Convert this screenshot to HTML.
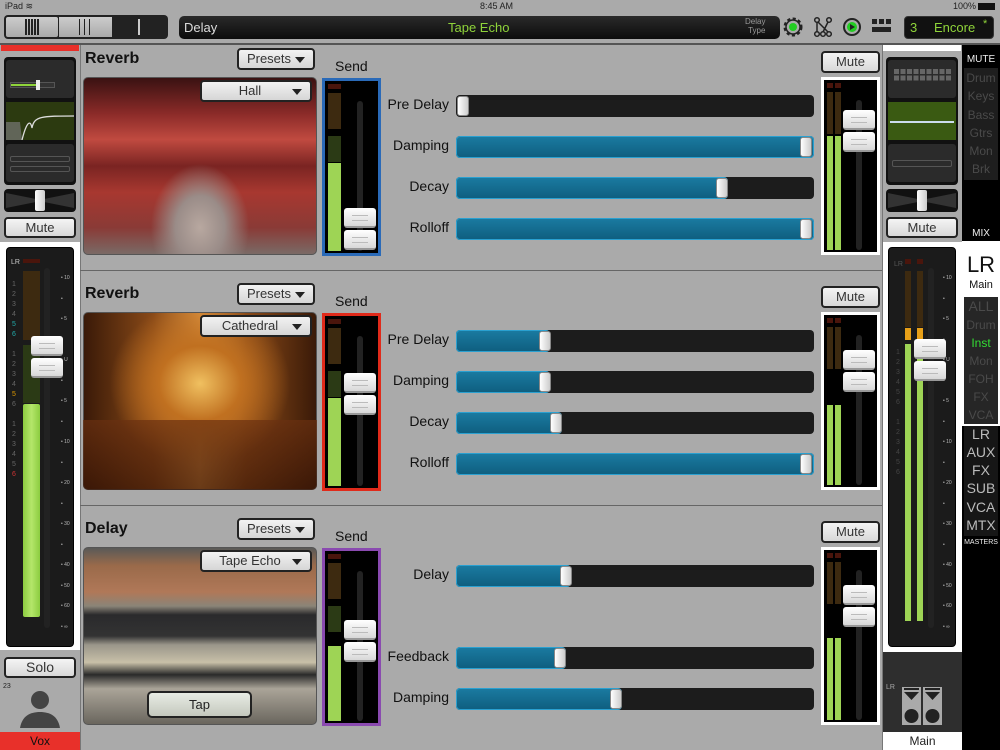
<!DOCTYPE html>
<html><head><meta charset="utf-8"><style>
*{box-sizing:border-box;margin:0;padding:0}
body{width:1000px;height:750px;background:#aaaaaa;font-family:"Liberation Sans",sans-serif;position:relative;overflow:hidden}
.a{position:absolute}
.btn{position:absolute;background:linear-gradient(#f4f4f4,#d8d8d8);border:2px solid #222;border-radius:4px;color:#333;text-align:center;font-size:13px}
.dd{position:absolute;background:linear-gradient(#f2f2f2,#d6d6d6);border:2px solid #222;border-radius:4px;color:#333;font-size:13px;text-align:center}
.dd:after{content:"";position:absolute;right:8px;top:7px;border-left:5px solid transparent;border-right:5px solid transparent;border-top:6px solid #222}
.title{position:absolute;left:85px;font-size:16px;font-weight:bold;color:#111}
.lbl{position:absolute;width:120px;text-align:right;left:329px;font-size:14px;color:#111}
.trk{position:absolute;left:456px;width:358px;height:22px;background:#1c1c1c;border-radius:4px}
.fill{position:absolute;left:0;top:0;height:22px;background:linear-gradient(#1a7aa0,#0f5f80);border:1px solid #2aa0d0;border-radius:4px}
.knob{position:absolute;top:1px;width:12px;height:20px;background:linear-gradient(90deg,#fff,#ccc);border-radius:3px;border:1px solid #888}
.send{position:absolute;left:322px;width:59px;height:178px;background:#000;border:3px solid}
.mbox{position:absolute;left:821px;width:59px;height:178px;background:#000;border:3px solid #fff}
.seg{position:absolute;width:13px}
.cap{position:absolute;width:34px;height:20px;background:linear-gradient(#fff,#d8d8d8);border-radius:3px;border-bottom:2px solid #999}
.cap:after{content:"";position:absolute;left:8px;right:8px;top:7px;height:4px;border-top:1px solid #bbb;border-bottom:1px solid #bbb}
.slot{position:absolute;width:6px;background:#222;border-radius:3px}
.sep{position:absolute;left:80px;width:802px;height:1px;background:#666}
.ml{position:absolute;left:962px;width:38px;text-align:center;font-size:12px;color:#4a4a4a}
.mm{position:absolute;left:962px;width:38px;text-align:center;font-size:14px;color:#bbb}
</style></head><body>
<!-- status -->
<div class="a" style="left:5px;top:1px;font-size:9px;color:#222">iPad ≋</div>
<div class="a" style="left:480px;top:1px;font-size:9px;color:#222">8:45 AM</div>
<div class="a" style="left:953px;top:1px;font-size:9px;color:#222">100%</div>
<div class="a" style="left:978px;top:3px;width:17px;height:7px;background:#111"></div>
<!-- top bar -->
<div class="a" style="left:4px;top:15px;width:164px;height:24px;background:#222;border-radius:4px"></div>
<div class="a" style="left:6px;top:17px;width:52px;height:20px;background:linear-gradient(#ccc,#aaa);border-radius:2px"></div>
<div class="a" style="left:59px;top:17px;width:53px;height:20px;background:linear-gradient(#ccc,#aaa)"></div>
<div class="a" style="left:25px;top:19px;width:14px;height:16px;background:repeating-linear-gradient(90deg,#222 0 2px,transparent 2px 3px)"></div>
<div class="a" style="left:77px;top:19px;width:16px;height:16px;background:repeating-linear-gradient(90deg,transparent 0 2px,#222 2px 3px,transparent 3px 5px)"></div>
<div class="a" style="left:138px;top:19px;width:2px;height:16px;background:#ccc"></div>
<div class="a" style="left:179px;top:16px;width:601px;height:23px;background:linear-gradient(#2a2a2a,#0c0c0c);border-radius:5px"></div>
<div class="a" style="left:184px;top:20px;font-size:13px;color:#ddd">Delay</div>
<div class="a" style="left:448px;top:20px;font-size:13px;color:#8fd43a">Tape Echo</div>
<div class="a" style="left:745px;top:17px;font-size:8px;line-height:9px;color:#999;text-align:right">Delay<br>Type</div>
<svg class="a" style="left:780px;top:14px" width="120" height="28">
<circle cx="13" cy="13" r="8" fill="none" stroke="#222" stroke-width="3" stroke-dasharray="3 2.3"/><circle cx="13" cy="13" r="7" fill="none" stroke="#222" stroke-width="1.5"/><circle cx="13" cy="13" r="4" fill="#2c2"/>
<g fill="none" stroke="#222" stroke-width="1.5"><circle cx="37" cy="6" r="2.3"/><circle cx="37" cy="20" r="2.3"/><circle cx="43" cy="20" r="2.3"/><circle cx="49" cy="20" r="2.3"/><circle cx="49" cy="6" r="2.3"/><path d="M37 8V18M38 8L48 18M48 8L43 18"/></g>
<circle cx="72" cy="13" r="8" fill="none" stroke="#222" stroke-width="2"/><circle cx="72" cy="13" r="5" fill="#2c2"/><path d="M70 10L75 13L70 16Z" fill="#222"/>
<g fill="#222"><rect x="92" y="5" width="5" height="5"/><rect x="99" y="5" width="5" height="5"/><rect x="106" y="5" width="5" height="5"/><rect x="92" y="13" width="19" height="5"/></g>
</svg>
<div class="a" style="left:904px;top:16px;width:90px;height:23px;background:#111;border-radius:4px;border:1px solid #333"></div>
<div class="a" style="left:910px;top:20px;font-size:13px;color:#8fd43a">3</div>
<div class="a" style="left:934px;top:20px;font-size:13px;color:#8fd43a">Encore</div>
<div class="a" style="left:983px;top:18px;font-size:11px;color:#8fd43a">*</div>
<div class="a" style="left:0;top:43px;width:1000px;height:2px;background:#555"></div>

<!-- left strip -->
<div class="a" style="left:80px;top:45px;width:1px;height:705px;background:#777"></div>
<div class="a" style="left:1px;top:45px;width:78px;height:6px;background:#e8302a"></div>
<div class="a" style="left:4px;top:57px;width:72px;height:128px;background:#111;border-radius:4px"></div>
<div class="a" style="left:6px;top:60px;width:68px;height:38px;background:#2b2b2b;border-radius:3px"></div>
<div class="a" style="left:10px;top:82px;width:45px;height:6px;background:#333;border:1px solid #555"></div>
<div class="a" style="left:11px;top:84px;width:28px;height:2px;background:#8fd43a"></div>
<div class="a" style="left:36px;top:80px;width:4px;height:10px;background:#eee"></div>
<div class="a" style="left:6px;top:102px;width:68px;height:38px;background:#2c3a10"></div>
<svg class="a" style="left:6px;top:102px" width="68" height="38"><path d="M0 20H14L16 38H0Z" fill="#777" opacity=".7"/><path d="M16 38C20 22 24 16 26 26C28 14 36 14 68 14" fill="none" stroke="#ddd" stroke-width="1.3"/></svg>
<div class="a" style="left:6px;top:144px;width:68px;height:38px;background:#2b2b2b;border-radius:3px"></div>
<div class="a" style="left:10px;top:156px;width:60px;height:6px;border:1px solid #555;border-radius:2px"></div>
<div class="a" style="left:10px;top:166px;width:60px;height:6px;border:1px solid #555;border-radius:2px"></div>
<div class="a" style="left:4px;top:189px;width:72px;height:23px;background:#111;border-radius:4px"></div>
<svg class="a" style="left:6px;top:191px" width="68" height="19"><path d="M0 2L30 8V11L0 17ZM68 2L38 8V11L68 17Z" fill="#333"/></svg>
<div class="a" style="left:35px;top:190px;width:10px;height:21px;background:linear-gradient(90deg,#fff,#ccc);border-radius:2px"></div>
<div class="btn" style="left:4px;top:217px;width:72px;height:21px;font-size:13px;line-height:17px">Mute</div>
<div class="a" style="left:0;top:242px;width:80px;height:408px;background:#fff"></div>
<div class="a" style="left:6px;top:247px;width:68px;height:400px;background:#1b1b1b;border:1px solid #000;border-radius:4px"></div>
<div class="a" style="left:11px;top:259px;font-size:7px;color:#ccc">LR</div>
<div class="a" style="left:23px;top:259px;width:17px;height:4px;background:#4a150c"></div>
<div class="a" style="left:23px;top:271px;width:17px;height:69px;background:#3d2a10"></div>
<div class="a" style="left:23px;top:345px;width:17px;height:58px;background:#2b3a15"></div>
<div class="a" style="left:23px;top:404px;width:17px;height:213px;background:linear-gradient(90deg,#8ccc40,#b4e66a,#8ccc40);border-radius:2px"></div>
<div class="slot" style="left:44px;top:268px;height:360px"></div>
<div class="a" style="left:12px;top:280px;font-size:7px;line-height:10px;color:#666">1<br>2<br>3<br>4<br><span style="color:#2aa">5</span><br><span style="color:#2aa">6</span><br><br>1<br>2<br>3<br>4<br><span style="color:#d90">5</span><br>6<br><br>1<br>2<br>3<br>4<br>5<br><span style="color:#c33">6</span></div>
<div class="a" style="left:61px;top:268px;font-size:5px;line-height:20.5px;color:#bbb">• 10<br>•<br>• 5<br>•<br>• U<br>•<br>• 5<br>•<br>• 10<br>•<br>• 20<br>•<br>• 30<br>•<br>• 40<br>• 50<br>• 60<br>• ∞</div>
<div class="cap" style="left:31px;top:336px;width:32px"></div>
<div class="cap" style="left:31px;top:358px;width:32px"></div>
<div class="btn" style="left:4px;top:657px;width:72px;height:21px;font-size:14px;line-height:17px">Solo</div>
<div class="a" style="left:3px;top:683px;font-size:7px;color:#222">23</div>
<svg class="a" style="left:18px;top:686px" width="44" height="44"><circle cx="22" cy="14" r="9" fill="#444"/><path d="M2 42C4 30 12 26 22 26S40 30 42 42Z" fill="#444"/></svg>
<div class="a" style="left:0;top:732px;width:80px;height:18px;background:#e8302a;text-align:center;font-size:12px;line-height:18px;color:#111">Vox</div>

<!-- sections -->
<div class="sep" style="top:270px"></div><div class="sep" style="top:505px"></div>

<!-- sec 1 -->
<div class="title" style="top:50px">Reverb</div>
<div class="dd" style="left:237px;top:48px;width:78px;height:22px;line-height:18px;padding-right:14px">Presets</div>
<div class="a" style="left:83px;top:77px;width:234px;height:178px;border-radius:5px;border:1px solid #555;background:radial-gradient(ellipse at 50% 85%,#b8a8a0 0,#9a8c88 15%,transparent 30%),linear-gradient(#3a1212 0%,#8a2a28 20%,#c04a40 35%,#7a2422 50%,#a83830 65%,#8a3a36 85%,#7a6a66 100%)"></div>
<div class="dd" style="left:200px;top:80px;width:112px;height:22px;line-height:18px;padding-right:12px">Hall</div>
<div class="a" style="left:335px;top:58px;font-size:14px;color:#111">Send</div>
<div class="send" style="top:78px;border-color:#2a6ab8">
<div class="seg" style="left:3px;top:3px;height:5px;background:#4a150c"></div>
<div class="seg" style="left:3px;top:12px;height:36px;background:#3d2a10"></div>
<div class="seg" style="left:3px;top:55px;height:26px;background:#2b3a15"></div>
<div class="seg" style="left:3px;top:82px;height:88px;background:#9ed455"></div>
<div class="slot" style="left:32px;top:20px;height:150px"></div>
<div class="cap" style="left:19px;top:127px;width:32px"></div><div class="cap" style="left:19px;top:149px;width:32px"></div></div>
<div class="lbl" style="top:96px">Pre Delay</div><div class="trk" style="top:95px"><div class="knob" style="left:1px"></div></div>
<div class="lbl" style="top:137px">Damping</div><div class="trk" style="top:136px"><div class="fill" style="width:358px"></div><div class="knob" style="left:344px"></div></div>
<div class="lbl" style="top:178px">Decay</div><div class="trk" style="top:177px"><div class="fill" style="width:272px"></div><div class="knob" style="left:260px"></div></div>
<div class="lbl" style="top:219px">Rolloff</div><div class="trk" style="top:218px"><div class="fill" style="width:358px"></div><div class="knob" style="left:344px"></div></div>
<div class="btn" style="left:821px;top:51px;width:59px;height:22px;line-height:18px">Mute</div>
<div class="mbox" style="top:77px">
<div class="seg" style="left:3px;top:3px;width:6px;height:5px;background:#4a150c"></div><div class="seg" style="left:11px;top:3px;width:6px;height:5px;background:#4a150c"></div>
<div class="seg" style="left:3px;top:12px;width:6px;height:42px;background:#3d2a10"></div><div class="seg" style="left:11px;top:12px;width:6px;height:42px;background:#3d2a10"></div>
<div class="seg" style="left:3px;top:56px;width:6px;height:114px;background:#9ed455"></div><div class="seg" style="left:11px;top:56px;width:6px;height:114px;background:#9ed455"></div>
<div class="slot" style="left:32px;top:20px;height:150px"></div>
<div class="cap" style="left:19px;top:30px;width:32px"></div><div class="cap" style="left:19px;top:52px;width:32px"></div></div>

<!-- sec 2 -->
<div class="title" style="top:285px">Reverb</div>
<div class="dd" style="left:237px;top:283px;width:78px;height:22px;line-height:18px;padding-right:14px">Presets</div>
<div class="a" style="left:83px;top:312px;width:234px;height:178px;border-radius:5px;border:1px solid #555;background:radial-gradient(ellipse at 50% 40%,#f0c060 0,#c07020 25%,transparent 55%),linear-gradient(90deg,#3a1a08,#8a4a18 30%,#d89040 50%,#8a4a18 70%,#3a1a08),#6a3010"></div>
<div class="a" style="left:83px;top:420px;width:234px;height:70px;border-radius:0 0 5px 5px;background:linear-gradient(#6a3010,#3a1606);opacity:.7"></div>
<div class="dd" style="left:200px;top:315px;width:112px;height:22px;line-height:18px;padding-right:12px">Cathedral</div>
<div class="a" style="left:335px;top:293px;font-size:14px;color:#111">Send</div>
<div class="send" style="top:313px;border-color:#e02a1a">
<div class="seg" style="left:3px;top:3px;height:5px;background:#4a150c"></div>
<div class="seg" style="left:3px;top:12px;height:36px;background:#3d2a10"></div>
<div class="seg" style="left:3px;top:55px;height:26px;background:#2b3a15"></div>
<div class="seg" style="left:3px;top:82px;height:88px;background:#9ed455"></div>
<div class="slot" style="left:32px;top:20px;height:150px"></div>
<div class="cap" style="left:19px;top:57px;width:32px"></div><div class="cap" style="left:19px;top:79px;width:32px"></div></div>
<div class="lbl" style="top:331px">Pre Delay</div><div class="trk" style="top:330px"><div class="fill" style="width:94px"></div><div class="knob" style="left:83px"></div></div>
<div class="lbl" style="top:372px">Damping</div><div class="trk" style="top:371px"><div class="fill" style="width:94px"></div><div class="knob" style="left:83px"></div></div>
<div class="lbl" style="top:413px">Decay</div><div class="trk" style="top:412px"><div class="fill" style="width:106px"></div><div class="knob" style="left:94px"></div></div>
<div class="lbl" style="top:454px">Rolloff</div><div class="trk" style="top:453px"><div class="fill" style="width:358px"></div><div class="knob" style="left:344px"></div></div>
<div class="btn" style="left:821px;top:286px;width:59px;height:22px;line-height:18px">Mute</div>
<div class="mbox" style="top:312px">
<div class="seg" style="left:3px;top:3px;width:6px;height:5px;background:#4a150c"></div><div class="seg" style="left:11px;top:3px;width:6px;height:5px;background:#4a150c"></div>
<div class="seg" style="left:3px;top:12px;width:6px;height:42px;background:#3d2a10"></div><div class="seg" style="left:11px;top:12px;width:6px;height:42px;background:#3d2a10"></div>
<div class="seg" style="left:3px;top:90px;width:6px;height:80px;background:#9ed455"></div><div class="seg" style="left:11px;top:90px;width:6px;height:80px;background:#9ed455"></div>
<div class="slot" style="left:32px;top:20px;height:150px"></div>
<div class="cap" style="left:19px;top:35px;width:32px"></div><div class="cap" style="left:19px;top:57px;width:32px"></div></div>

<!-- sec 3 -->
<div class="title" style="top:520px">Delay</div>
<div class="dd" style="left:237px;top:518px;width:78px;height:22px;line-height:18px;padding-right:14px">Presets</div>
<div class="a" style="left:83px;top:547px;width:234px;height:178px;border-radius:5px;border:1px solid #555;background:linear-gradient(#5a5a58 0%,#9a6a4a 10%,#b07858 25%,#8a8478 33%,#2a2a2c 38%,#333 50%,#9a968a 55%,#c8c0a8 65%,#2a2a2a 72%,#aaa498 80%,#6a665e 100%)"></div>
<div class="dd" style="left:200px;top:550px;width:112px;height:22px;line-height:18px;padding-right:12px">Tape Echo</div>
<div class="a" style="left:147px;top:691px;width:105px;height:27px;background:linear-gradient(#e8ece4,#c4c8be);border:2px solid #222;border-radius:5px;text-align:center;font-size:13px;line-height:23px;color:#222">Tap</div>
<div class="a" style="left:335px;top:528px;font-size:14px;color:#111">Send</div>
<div class="send" style="top:548px;border-color:#8a4ab0">
<div class="seg" style="left:3px;top:3px;height:5px;background:#4a150c"></div>
<div class="seg" style="left:3px;top:12px;height:36px;background:#3d2a10"></div>
<div class="seg" style="left:3px;top:55px;height:26px;background:#2b3a15"></div>
<div class="seg" style="left:3px;top:95px;height:75px;background:#9ed455"></div>
<div class="slot" style="left:32px;top:20px;height:150px"></div>
<div class="cap" style="left:19px;top:69px;width:32px"></div><div class="cap" style="left:19px;top:91px;width:32px"></div></div>
<div class="lbl" style="top:566px">Delay</div><div class="trk" style="top:565px"><div class="fill" style="width:115px"></div><div class="knob" style="left:104px"></div></div>
<div class="lbl" style="top:648px">Feedback</div><div class="trk" style="top:647px"><div class="fill" style="width:110px"></div><div class="knob" style="left:98px"></div></div>
<div class="lbl" style="top:689px">Damping</div><div class="trk" style="top:688px"><div class="fill" style="width:166px"></div><div class="knob" style="left:154px"></div></div>
<div class="btn" style="left:821px;top:521px;width:59px;height:22px;line-height:18px">Mute</div>
<div class="mbox" style="top:547px">
<div class="seg" style="left:3px;top:3px;width:6px;height:5px;background:#4a150c"></div><div class="seg" style="left:11px;top:3px;width:6px;height:5px;background:#4a150c"></div>
<div class="seg" style="left:3px;top:12px;width:6px;height:42px;background:#3d2a10"></div><div class="seg" style="left:11px;top:12px;width:6px;height:42px;background:#3d2a10"></div>
<div class="seg" style="left:3px;top:88px;width:6px;height:82px;background:#9ed455"></div><div class="seg" style="left:11px;top:88px;width:6px;height:82px;background:#9ed455"></div>
<div class="slot" style="left:32px;top:20px;height:150px"></div>
<div class="cap" style="left:19px;top:35px;width:32px"></div><div class="cap" style="left:19px;top:57px;width:32px"></div></div>

<!-- right strip -->
<div class="a" style="left:882px;top:45px;width:80px;height:705px;background:#aaa;border-left:1px solid #777"></div>
<div class="a" style="left:883px;top:45px;width:78px;height:6px;background:#fff"></div>
<div class="a" style="left:886px;top:57px;width:72px;height:128px;background:#111;border-radius:4px"></div>
<div class="a" style="left:888px;top:60px;width:68px;height:38px;background:#2b2b2b;border-radius:3px"></div>
<div class="a" style="left:894px;top:69px;width:58px;height:18px;background:repeating-linear-gradient(90deg,#666 0 5px,transparent 5px 6.5px);-webkit-mask:linear-gradient(#000 0 5px,transparent 5px 6.5px,#000 6.5px 11.5px,transparent 11.5px)"></div>
<div class="a" style="left:888px;top:102px;width:68px;height:38px;background:#3a5a12"></div>
<div class="a" style="left:890px;top:121px;width:64px;height:2px;background:#cde"></div>
<div class="a" style="left:888px;top:144px;width:68px;height:38px;background:#2b2b2b;border-radius:3px"></div>
<div class="a" style="left:892px;top:160px;width:60px;height:7px;border:1px solid #555;border-radius:2px"></div>
<div class="a" style="left:886px;top:189px;width:72px;height:23px;background:#111;border-radius:4px"></div>
<svg class="a" style="left:888px;top:191px" width="68" height="19"><path d="M0 2L30 8V11L0 17ZM68 2L38 8V11L68 17Z" fill="#333"/></svg>
<div class="a" style="left:917px;top:190px;width:10px;height:21px;background:linear-gradient(90deg,#fff,#ccc);border-radius:2px"></div>
<div class="btn" style="left:886px;top:217px;width:72px;height:21px;line-height:17px">Mute</div>
<div class="a" style="left:883px;top:242px;width:79px;height:410px;background:#fff"></div>
<div class="a" style="left:888px;top:247px;width:68px;height:400px;background:#1b1b1b;border:1px solid #000;border-radius:4px"></div>
<div class="a" style="left:894px;top:261px;font-size:7px;color:#555">LR</div>
<div class="a" style="left:905px;top:259px;width:6px;height:5px;background:#4a150c"></div><div class="a" style="left:917px;top:259px;width:6px;height:5px;background:#4a150c"></div>
<div class="a" style="left:905px;top:271px;width:6px;height:56px;background:#3d2a10"></div><div class="a" style="left:917px;top:271px;width:6px;height:56px;background:#3d2a10"></div>
<div class="a" style="left:905px;top:328px;width:6px;height:12px;background:#e8a018"></div><div class="a" style="left:917px;top:328px;width:6px;height:12px;background:#e8a018"></div>
<div class="a" style="left:905px;top:344px;width:6px;height:277px;background:#9ed455"></div><div class="a" style="left:917px;top:344px;width:6px;height:277px;background:#9ed455"></div>
<div class="slot" style="left:928px;top:268px;height:360px"></div>
<div class="a" style="left:896px;top:348px;font-size:7px;line-height:10px;color:#444">1<br>2<br>3<br>4<br>5<br>6<br><br>1<br>2<br>3<br>4<br>5<br>6</div>
<div class="a" style="left:943px;top:268px;font-size:5px;line-height:20.5px;color:#bbb">• 10<br>•<br>• 5<br>•<br>• U<br>•<br>• 5<br>•<br>• 10<br>•<br>• 20<br>•<br>• 30<br>•<br>• 40<br>• 50<br>• 60<br>• ∞</div>
<div class="cap" style="left:914px;top:339px;width:32px"></div><div class="cap" style="left:914px;top:361px;width:32px"></div>
<div class="a" style="left:883px;top:652px;width:79px;height:80px;background:#2e2e2e"></div>
<div class="a" style="left:886px;top:684px;font-size:7px;color:#aaa">LR</div>
<svg class="a" style="left:902px;top:687px" width="42" height="40"><g fill="#aaa"><rect x="0" y="0" width="19" height="38"/><rect x="21" y="0" width="19" height="38"/></g><g fill="#222"><circle cx="9.5" cy="29" r="7"/><circle cx="30.5" cy="29" r="7"/><path d="M2 5L9.5 13L17 5ZM23 5L30.5 13L38 5Z"/><rect x="2" y="1" width="15" height="2"/><rect x="23" y="1" width="15" height="2"/></g></svg>
<div class="a" style="left:883px;top:732px;width:79px;height:18px;background:#fff;text-align:center;font-size:12px;line-height:18px;color:#222">Main</div>

<!-- black column -->
<div class="a" style="left:962px;top:45px;width:38px;height:705px;background:#000"></div>
<div class="a" style="left:962px;top:54px;width:38px;text-align:center;font-size:10px;color:#eee">MUTE</div>
<div class="a" style="left:964px;top:68px;width:34px;height:112px;background:#1e1e1e"></div>
<div class="ml" style="top:71px">Drum</div><div class="ml" style="top:89px">Keys</div><div class="ml" style="top:108px">Bass</div><div class="ml" style="top:126px">Gtrs</div><div class="ml" style="top:144px">Mon</div><div class="ml" style="top:162px">Brk</div>
<div class="a" style="left:962px;top:228px;width:38px;text-align:center;font-size:10px;color:#eee">MIX</div>
<div class="a" style="left:962px;top:241px;width:38px;height:185px;background:#fff"></div>
<div class="a" style="left:962px;top:252px;width:38px;text-align:center;font-size:22px;color:#111">LR</div>
<div class="a" style="left:962px;top:279px;width:38px;text-align:center;font-size:11px;color:#111">Main</div>
<div class="a" style="left:964px;top:297px;width:34px;height:127px;background:#262626"></div>
<div class="ml" style="top:298px;font-size:14px">ALL</div><div class="ml" style="top:318px">Drum</div><div class="ml" style="top:336px;color:#3d3">Inst</div><div class="ml" style="top:354px">Mon</div><div class="ml" style="top:372px">FOH</div><div class="ml" style="top:390px">FX</div><div class="ml" style="top:408px">VCA</div>
<div class="a" style="left:964px;top:426px;width:34px;height:110px;background:#161616"></div>
<div class="mm" style="top:426px">LR</div><div class="mm" style="top:444px">AUX</div><div class="mm" style="top:462px">FX</div><div class="mm" style="top:480px">SUB</div><div class="mm" style="top:499px">VCA</div><div class="mm" style="top:517px">MTX</div>
<div class="a" style="left:962px;top:539px;width:38px;text-align:center;font-size:7px;color:#eee">MASTERS</div>
</body></html>
